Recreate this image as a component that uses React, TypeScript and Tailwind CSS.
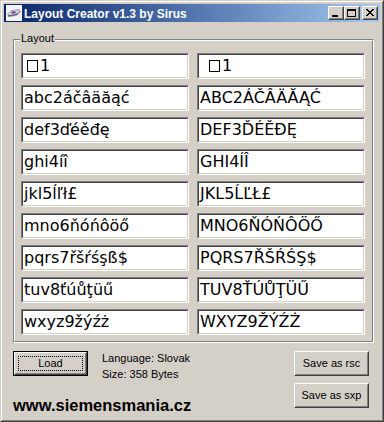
import React from "react";

const ROWS: [string, string][] = [
  ["\u25A11", " \u25A11"],
  ["abc2áčâäăąć", "ABC2ÁČÂÄĂĄĆ"],
  ["def3ďéěđę", "DEF3ĎÉĚĐĘ"],
  ["ghi4íî", "GHI4ÍÎ"],
  ["jkl5ĺľł£", "JKL5ĹĽŁ£"],
  ["mno6ňóńôöő", "MNO6ŇÓŃÔÖŐ"],
  ["pqrs7řšŕśşß$", "PQRS7ŘŠŔŚŞ$"],
  ["tuv8ťúůţüű", "TUV8ŤÚŮŢÜŰ"],
  ["wxyz9žýźż", "WXYZ9ŽÝŹŻ"],
];

// missing-glyph box like the old win32 edit control draws
const BoxGlyph = () => (
  <span className="inline-block w-[11px] h-[12px] border border-black mr-[2px] align-middle" />
);

const TextValue = ({ value }: { value: string }) => {
  if (value.includes("\u25A1")) {
    const lead = value.startsWith(" ");
    return (
      <span className={`flex items-center ${lead ? "pl-[9px]" : "pl-[3px]"}`}>
        <BoxGlyph />
        <span>1</span>
      </span>
    );
  }
  return <span>{value}</span>;
};

const Edit = ({ value }: { value: string }) => (
  <div className="border border-t-[#808080] border-l-[#808080] border-r-white border-b-white">
    <div className="h-[24px] border border-t-[#404040] border-l-[#404040] border-r-[#d4d0c8] border-b-[#d4d0c8] bg-white pl-[1px] flex items-center text-[16px] leading-[22px] text-black whitespace-nowrap overflow-hidden font-['DejaVu_Sans',sans-serif]">
      <TextValue value={value} />
    </div>
  </div>
);

const Raised = ({ children, className }: { children: React.ReactNode; className: string }) => (
  <div className={`border border-t-white border-l-white border-r-[#404040] border-b-[#404040] ${className}`}>
    <div className="w-full h-full border border-t-[#d4d0c8] border-l-[#d4d0c8] border-r-[#808080] border-b-[#808080] flex items-center justify-center">
      {children}
    </div>
  </div>
);

const CaptionButton = ({ kind }: { kind: "min" | "max" | "close" }) => (
  <Raised className="w-[16px] h-[14px] bg-[#d4d0c8]">
    <svg width="12" height="10" viewBox="0 0 12 10" shapeRendering="crispEdges">
      {kind === "min" && <rect x="2" y="7" width="6" height="2" fill="#000" />}
      {kind === "max" && (
        <g fill="none" stroke="#000">
          <rect x="1.5" y="1.5" width="8" height="7" />
          <line x1="1" y1="2.5" x2="10" y2="2.5" />
        </g>
      )}
      {kind === "close" && (
        <g fill="#000">
          {[0, 1, 2, 3, 4, 5, 6].map((i) => (
            <React.Fragment key={i}>
              <rect x={2 + i} y={1 + i} width="2" height="1" />
              <rect x={8 - i} y={1 + i} width="2" height="1" />
            </React.Fragment>
          ))}
        </g>
      )}
    </svg>
  </Raised>
);

const AppIcon = () => (
  <svg width="16" height="16" viewBox="0 0 16 16">
    <rect width="16" height="16" fill="#f4f4f8" />
    <path d="M1 9 L6 5 L13 4 L15 7 L10 11 L3 12 Z" fill="#9a9aae" />
    <path d="M2 9 L6 6 L12 5 L13 7 L9 9 L4 10 Z" fill="#d8d8e4" />
    <path d="M5 7 L9 6 L10 8 L6 9 Z" fill="#7a4a9a" />
    <path d="M2 11 L8 10 L12 9" stroke="#5a5a70" strokeWidth="1" fill="none" />
  </svg>
);

const PushButton = ({ label, isDefault }: { label: string; isDefault?: boolean }) =>
  isDefault ? (
    <div className="w-[75px] h-[25px] border border-black">
      <Raised className="w-full h-full">
        <div className="w-full h-full p-[2px]">
          <div className="w-full h-full border border-dotted border-black flex items-center justify-center">
            {label}
          </div>
        </div>
      </Raised>
    </div>
  ) : (
    <Raised className="w-[75px] h-[25px]">
      <span>{label}</span>
    </Raised>
  );

export default function App() {
  return (
    <div className="w-[384px] h-[422px] border border-t-[#d4d0c8] border-l-[#d4d0c8] border-r-[#404040] border-b-[#404040] bg-[#d4d0c8] font-['Liberation_Sans',Arial,sans-serif] text-[11px] text-black select-none">
      <div className="w-full h-full border border-t-white border-l-white border-r-[#808080] border-b-[#808080] p-[2px] flex flex-col">
        {/* caption */}
        <div className="h-[18px] flex items-center bg-gradient-to-r from-[#0a246a] to-[#a6caf0] pl-[2px] pr-[2px]">
          <AppIcon />
          <span className="ml-[2px] pt-[1px] text-white font-bold text-[12px] leading-[18px] whitespace-nowrap">
            Layout Creator v1.3 by Sirus
          </span>
          <div className="ml-auto flex items-center">
            <CaptionButton kind="min" />
            <CaptionButton kind="max" />
            <div className="ml-[2px]">
              <CaptionButton kind="close" />
            </div>
          </div>
        </div>

        {/* group box */}
        <div className="relative mt-[17px] ml-[9px] mr-[6px] border border-t-[#808080] border-l-[#808080] border-r-white border-b-white">
          <span className="absolute -top-[8px] left-[6px] bg-[#d4d0c8] px-[1px] leading-[13px]">Layout</span>
          <div className="border border-t-white border-l-white border-r-[#808080] border-b-[#808080] pt-[12px] pb-[6px] pl-[6px] pr-[7px] grid grid-cols-2 gap-x-[8px] gap-y-[6px]">
            {ROWS.map(([lo, up], i) => (
              <React.Fragment key={i}>
                <Edit value={lo} />
                <Edit value={up} />
              </React.Fragment>
            ))}
          </div>
        </div>

        {/* bottom */}
        <div className="flex justify-between pl-[9px] pr-[11px] pt-[8px]">
          <div className="flex flex-col">
            <div className="flex">
              <PushButton label="Load" isDefault />
              <div className="ml-[14px] -mt-[1px] leading-[16px] whitespace-nowrap">
                <div>Language: Slovak</div>
                <div>Size: 358 Bytes</div>
              </div>
            </div>
            <div className="mt-[14px] text-[16.5px] leading-[18px] font-bold whitespace-nowrap">
              www.siemensmania.cz
            </div>
          </div>
          <div className="flex flex-col gap-[7px]">
            <PushButton label="Save as rsc" />
            <PushButton label="Save as sxp" />
          </div>
        </div>
      </div>
    </div>
  );
}
